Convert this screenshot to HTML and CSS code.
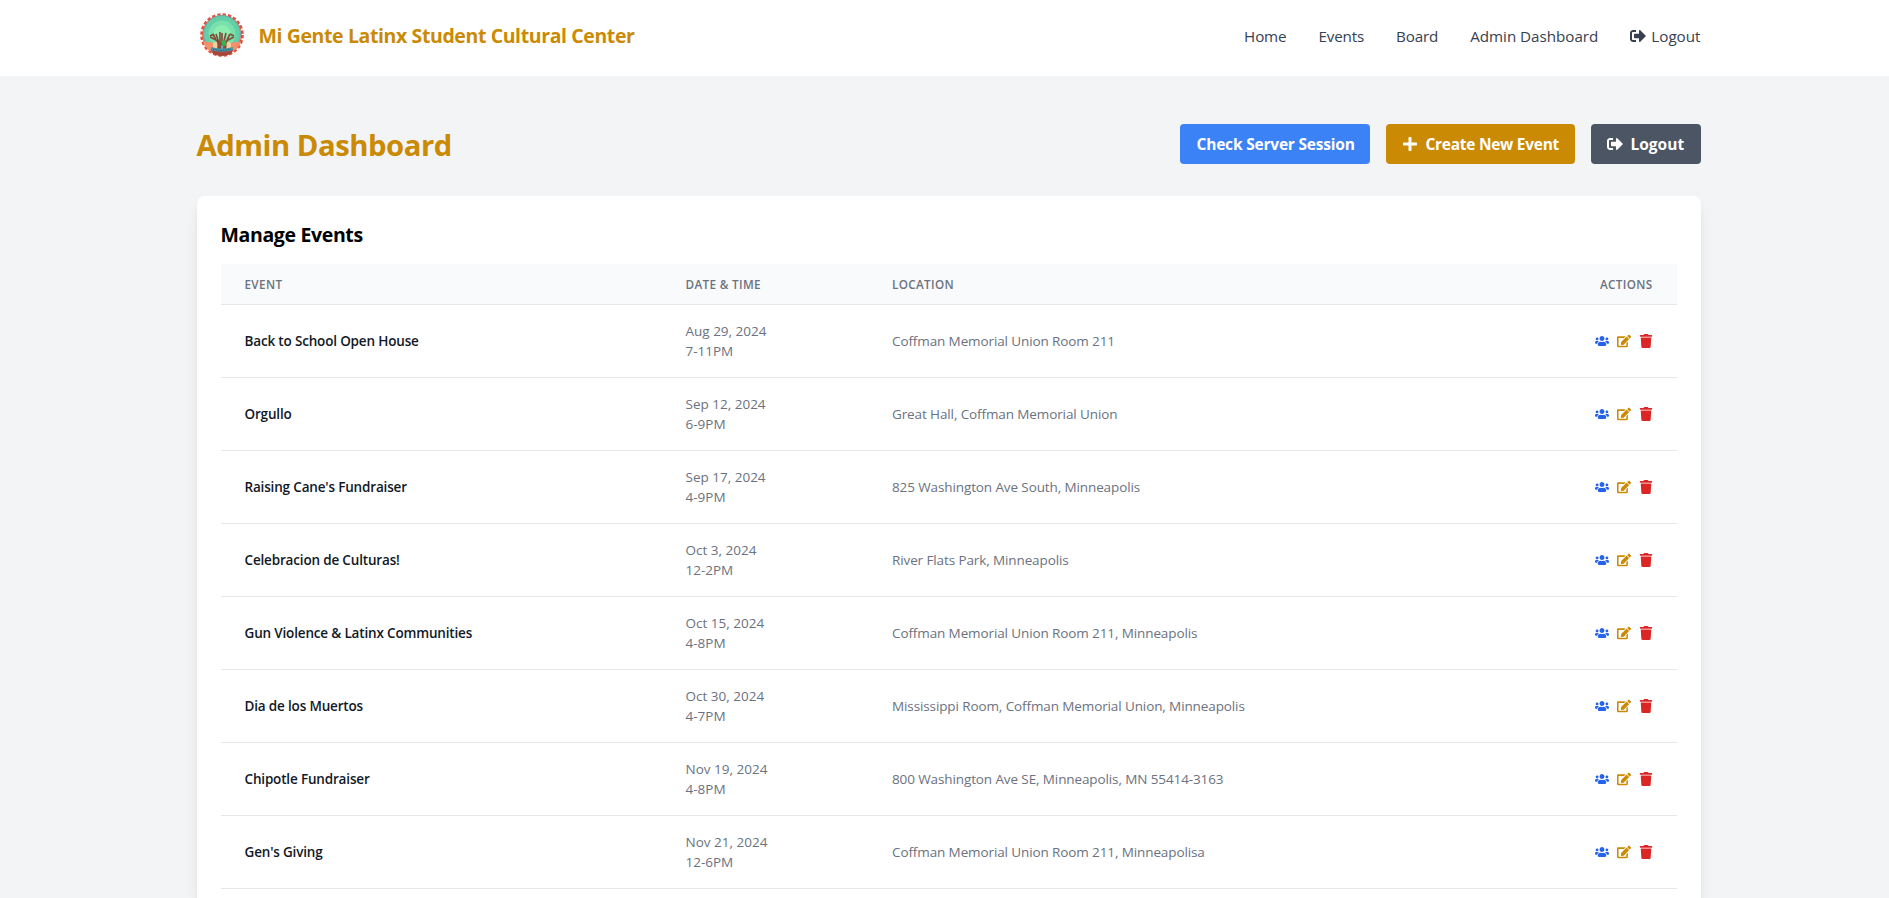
FILE: index.html
```html
<!DOCTYPE html>
<html lang="en">
<head>
<meta charset="utf-8">
<title>Admin Dashboard</title>
<link rel="stylesheet" href="styles.css">
</head>
<body>
<svg class="sprite" aria-hidden="true">
  <symbol id="signout" viewBox="0 0 512 512"><path d="M497 273L329 441c-15 15-41 4.500-41-17v-96H152c-13.300 0-24-10.700-24-24v-96c0-13.300 10.700-24 24-24h136V88c0-21.400 25.900-32 41-17l168 168c9.300 9.400 9.300 24.600 0 34zM192 436v-40c0-6.600-5.400-12-12-12H96c-17.700 0-32-14.300-32-32V160c0-17.700 14.300-32 32-32h84c6.600 0 12-5.400 12-12V76c0-6.600-5.400-12-12-12H96c-53 0-96 43-96 96v192c0 53 43 96 96 96h84c6.600 0 12-5.400 12-12z"/></symbol>
  <symbol id="plus" viewBox="0 0 448 512"><path d="M416 208H272V64c0-17.670-14.330-32-32-32h-32c-17.670 0-32 14.330-32 32v144H32c-17.670 0-32 14.330-32 32v32c0 17.670 14.330 32 32 32h144v144c0 17.670 14.330 32 32 32h32c17.670 0 32-14.330 32-32V304h144c17.670 0 32-14.330 32-32v-32c0-17.670-14.330-32-32-32z"/></symbol>
  <symbol id="users" viewBox="0 0 640 512"><path d="M96 224c35.300 0 64-28.700 64-64s-28.700-64-64-64-64 28.700-64 64 28.700 64 64 64zm448 0c35.300 0 64-28.700 64-64s-28.700-64-64-64-64 28.700-64 64 28.700 64 64 64zm32 32h-64c-17.600 0-33.500 7.100-45.100 18.600 40.300 22.100 68.900 62 75.100 109.400h66c17.700 0 32-14.300 32-32v-32c0-35.300-28.700-64-64-64zm-256 0c61.900 0 112-50.100 112-112S381.900 32 320 32 208 82.100 208 144s50.100 112 112 112zm76.800 32h-8.300c-20.800 10-43.900 16-68.500 16s-47.600-6-68.500-16h-8.300C179.600 288 128 339.600 128 403.200V432c0 26.500 21.500 48 48 48h288c26.500 0 48-21.500 48-48v-28.800c0-63.600-51.600-115.200-115.200-115.200zm-223.700-13.400C161.500 263.100 145.600 256 128 256H64c-35.300 0-64 28.700-64 64v32c0 17.700 14.300 32 32 32h65.900c6.300-47.400 34.900-87.300 75.200-109.400z"/></symbol>
  <symbol id="edit" viewBox="0 0 576 512"><path d="M402.600 83.200l90.200 90.200c3.800 3.800 3.800 10 0 13.800L274.400 405.600l-92.800 10.300c-12.400 1.400-22.900-9.100-21.500-21.500l10.300-92.800L388.800 83.200c3.800-3.800 10-3.800 13.800 0zm162-22.900l-48.800-48.800c-15.200-15.200-39.900-15.200-55.200 0l-35.400 35.400c-3.800 3.800-3.800 10 0 13.800l90.200 90.200c3.800 3.800 10 3.800 13.800 0l35.400-35.400c15.200-15.300 15.200-40 0-55.200zM384 346.200V448H64V128h229.800c3.200 0 6.200-1.300 8.500-3.500l40-40c7.600-7.600 2.200-20.500-8.500-20.500H48C21.500 64 0 85.500 0 112v352c0 26.500 21.500 48 48 48h352c26.500 0 48-21.500 48-48V306.200c0-10.700-12.900-16-20.500-8.500l-40 40c-2.200 2.300-3.500 5.300-3.500 8.500z"/></symbol>
  <symbol id="trash" viewBox="0 0 448 512"><path d="M432 32H312l-9.400-18.700A24 24 0 0 0 281.100 0H166.800a23.720 23.720 0 0 0-21.400 13.300L136 32H16A16 16 0 0 0 0 48v32a16 16 0 0 0 16 16h416a16 16 0 0 0 16-16V48a16 16 0 0 0-16-16zM53.200 467a48 48 0 0 0 47.900 45h245.800a48 48 0 0 0 47.900-45L416 128H32z"/></symbol>
</svg>

<header class="site-header">
  <div class="container header-row">
    <a class="brand">
      <svg class="logo" viewBox="0 0 48 48">
        <circle cx="24" cy="24" r="20" fill="#f0836a"/>
        <circle cx="24" cy="24" r="20.300" fill="none" stroke="#e2513f" stroke-width="3" stroke-dasharray="3.300 2.015"/>
        <circle cx="24" cy="23" r="18.500" fill="#62cfa6"/>
        <circle cx="24" cy="23" r="18.300" fill="none" stroke="#67aeb0" stroke-width="1"/>
        <circle cx="24" cy="23" r="13.500" fill="#78dfad"/>
        <circle cx="24" cy="23" r="9" fill="#8bedb0"/>
        <path d="M5 31q8-1 12 2h14q6-3 12-2-4 11-19 12.500Q9 42 5 31z" fill="#f4906c"/>
        <path d="M15 32q9-4 18 0v5H15z" fill="#f3d19a"/>
        <path d="M12.500 38q11.500 4 23 0l-2.500 5q-9 4-18 0z" fill="#a5493f"/>
        <path d="M20 38q2-6-2-9l-6-3m6 3-3-6m6 9-3-9m4 9V21m2 17V22m2 8 2-8m-1 16q-1-6 3-9l6-3m-7 3 3-6M12 25l4-2m20 2-4-2" fill="none" stroke="#80503d" stroke-width="1.700"/>
        <path d="M19.500 31h9v8h-9z" fill="#80503d"/>
        <path d="m23 30 5-1v5l-3 2z" fill="#35b34a"/>
        <path d="m23 34 2 1v3h-2z" fill="#6ba7c8"/>
        <path d="M13 37.500q11 3.500 22 0" fill="none" stroke="#4598a8" stroke-width="3"/>
        <path d="M15 38q9 3 18 0" fill="none" stroke="#285d79" stroke-width="1" stroke-dasharray="1.500 1"/>
      </svg>
      <span class="brand-name">Mi Gente Latinx Student Cultural Center</span>
    </a>
    <nav class="nav">
      <a>Home</a><a>Events</a><a>Board</a><a class="nav-admin">Admin Dashboard</a>
      <a class="nav-logout"><svg class="nav-icon"><use href="#signout"/></svg>Logout</a>
    </nav>
  </div>
</header>

<main class="container main">
  <div class="title-row">
    <h1 class="title">Admin Dashboard</h1>
    <div class="buttons">
      <button class="btn btn-check">Check Server Session</button>
      <button class="btn btn-create"><svg class="btn-icon"><use href="#plus"/></svg><span>Create New Event</span></button>
      <button class="btn btn-logout"><svg class="btn-icon"><use href="#signout"/></svg><span>Logout</span></button>
    </div>
  </div>
  <section class="card">
    <h2 class="card-title">Manage Events</h2>
    <table class="events">
      <colgroup><col class="col-event"><col class="col-date"><col><col class="col-actions"></colgroup>
      <thead><tr><th>Event</th><th>Date &amp; Time</th><th>Location</th><th class="right">Actions</th></tr></thead>
      <tbody id="rows"></tbody>
    </table>
  </section>
</main>
<script src="app.js"></script>
</body>
</html>
```

FILE: app.js
```js
const events = [
  ["Back to School Open House", "Aug 29, 2024", "7-11PM", "Coffman Memorial Union Room 211"],
  ["Orgullo", "Sep 12, 2024", "6-9PM", "Great Hall, Coffman Memorial Union"],
  ["Raising Cane's Fundraiser", "Sep 17, 2024", "4-9PM", "825 Washington Ave South, Minneapolis"],
  ["Celebracion de Culturas!", "Oct 3, 2024", "12-2PM", "River Flats Park, Minneapolis"],
  ["Gun Violence & Latinx Communities", "Oct 15, 2024", "4-8PM", "Coffman Memorial Union Room 211, Minneapolis"],
  ["Dia de los Muertos", "Oct 30, 2024", "4-7PM", "Mississippi Room, Coffman Memorial Union, Minneapolis"],
  ["Chipotle Fundraiser", "Nov 19, 2024", "4-8PM", "800 Washington Ave SE, Minneapolis, MN 55414-3163"],
  ["Gen's Giving", "Nov 21, 2024", "12-6PM", "Coffman Memorial Union Room 211, Minneapolisa"]
];
const icon = (name) => `<svg class="act ${name}"><use href="#${name}"/></svg>`;
document.getElementById("rows").innerHTML = events.map(([name, date, time, place]) => `
  <tr>
    <td class="name">${name.replace("&", "&amp;")}</td>
    <td class="date"><div>${date}</div><div>${time}</div></td>
    <td class="place">${place}</td>
    <td><div class="actions">${icon("users")}${icon("edit")}${icon("trash")}</div></td>
  </tr>`).join("");
```

FILE: styles.css
```css
* { box-sizing: border-box; margin: 0; padding: 0; }
html { background: #f3f4f6; }
body {
  height: 898px;
  overflow: hidden;
  font-family: "Open Sans", "Noto Sans", sans-serif;
  font-size: 15.5px;
  line-height: 24px;
  color: #000;
}
.sprite { display: none; }
svg { fill: currentColor; flex: none; }
.container { width: 1504px; margin-left: 196.5px; }

.site-header { height: 76px; background: #fff; }
.header-row { display: flex; justify-content: space-between; height: 70px; align-items: center; }
.brand { display: flex; align-items: center; }
.logo { width: 48px; height: 48px; margin-left: 1px; margin-right: 13px; }
.brand-name { padding-top: 2px; font-size: 19.5px; font-weight: 700; line-height: 28px; letter-spacing: -.39px; color: #ca8a04; }
.nav { display: flex; gap: 32px; padding-top: 1px; font-size: 15.2px; letter-spacing: -.15px; color: #374151; }
.nav-admin { letter-spacing: -.02px; }
.nav-logout { display: flex; align-items: center; letter-spacing: 0; }
.nav-icon { width: 16px; height: 16px; margin-right: 5px; }

.main { padding-top: 48px; }
.title-row { display: flex; justify-content: space-between; align-items: center; height: 40px; margin-bottom: 32px; }
.title { padding-top: 2px; font-size: 29.3px; font-weight: 700; line-height: 36px; letter-spacing: -.5px; color: #ca8a04; }
.buttons { display: flex; gap: 16px; }
.btn {
  display: flex;
  align-items: center;
  height: 40px;
  padding: 0 16px;
  border: 0;
  border-radius: 4px;
  font: 700 15.5px/24px "Open Sans", "Noto Sans", sans-serif;
  color: #fff;
  white-space: nowrap;
}
.btn-check { width: 190px; padding-left: 17px; letter-spacing: -.2px; background: #3b82f6; }
.btn-create { width: 189px; letter-spacing: -.28px; background: #ca8a04; }
.btn-logout { width: 110px; background: #4b5563; }
.btn-icon { width: 16px; height: 16px; margin-right: 8px; }

.card {
  height: 702px;
  padding: 24px;
  border-radius: 8px 8px 0 0;
  background: #fff;
  box-shadow: 0 10px 15px -3px rgba(0, 0, 0, .1), 0 4px 6px -2px rgba(0, 0, 0, .05);
}
.card-title { padding-top: 1px; font-size: 19.5px; font-weight: 700; line-height: 28px; letter-spacing: -.35px; margin-bottom: 15px; }
.events { width: 100%; table-layout: fixed; border-collapse: separate; border-spacing: 0; }
.col-event { width: 441px; }
.col-date { width: 206.500px; }
.col-actions { width: 140px; }
th {
  height: 41px;
  padding: 0 24px;
  border-bottom: 1px solid #e5e7eb;
  background: #f9fafb;
  font-size: 11.7px;
  font-weight: 600;
  line-height: 16px;
  letter-spacing: .35px;
  text-align: left;
  text-transform: uppercase;
  color: #6b7280;
}
th.right { text-align: right; }
td {
  height: 73px;
  padding: 0 24px;
  border-bottom: 1px solid #e5e7eb;
  font-size: 13.5px;
  line-height: 20px;
  color: #6b7280;
  white-space: nowrap;
}
.name { font-weight: 600; letter-spacing: -.17px; color: #111827; }
.place { letter-spacing: -.11px; }
.actions { display: flex; justify-content: flex-end; gap: 8px; }
.act { width: 14px; height: 14px; }
.users { color: #2563eb; }
.edit { color: #ca8a04; }
.trash { color: #dc2626; }
```
